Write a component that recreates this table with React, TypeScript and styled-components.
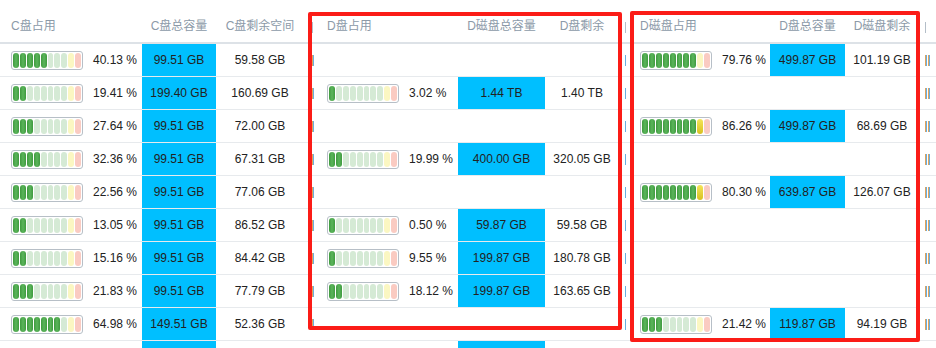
import React from "react";
import styled, { createGlobalStyle, css } from "styled-components";

const Global = createGlobalStyle`
  html, body { margin: 0; padding: 0; background: #fff; }
  body { width: 936px; height: 348px; overflow: hidden; font-family: "Liberation Sans", "Noto Sans CJK SC", Arial, sans-serif; }
`;

const COLS = "142px 74px 88px 12px 142px 87px 74px 10px 141px 75px 74px 17px";

const Page = styled.div`
  position: relative;
  width: 936px;
  height: 348px;
  overflow: hidden;
`;

const HeaderRow = styled.div`
  display: grid;
  grid-template-columns: ${COLS};
  height: 42px;
  border-bottom: 2px solid #dde2e7;
`;

const HeadCell = styled.div<{ $align?: "left" | "center" }>`
  display: flex;
  align-items: flex-end;
  justify-content: ${(p) => (p.$align === "left" ? "flex-start" : "center")};
  padding: 0 0 9px ${(p) => (p.$align === "left" ? "11px" : "0")};
  font-size: 12px;
  line-height: 14px;
  color: #8c9aa8;
  white-space: nowrap;
`;

const HeadSep = styled.div<{ $offset: number }>`
  position: relative;
  &::after {
    content: "";
    position: absolute;
    left: ${(p) => p.$offset}px;
    top: 22px;
    width: 1px;
    height: 11px;
    background: #b4bec8;
  }
`;

const Row = styled.div`
  display: grid;
  grid-template-columns: ${COLS};
  height: 33px;
`;

const cellBase = css`
  box-sizing: border-box;
  border-bottom: 1px solid #e7eaed;
  display: flex;
  align-items: center;
  font-size: 12px;
  color: #222;
  white-space: nowrap;
`;

const UsageCell = styled.div`
  ${cellBase};
  padding-left: 11px;
  gap: 10px;
`;

const ValueCell = styled.div<{ $blue?: boolean }>`
  ${cellBase};
  justify-content: center;
  background: ${(p) => (p.$blue ? "#00bfff" : "transparent")};
`;

const MarkerCell = styled.div`
  ${cellBase};
  position: relative;
`;

const Tick = styled.span<{ $left: number; $kind: "warm" | "cool" }>`
  position: absolute;
  left: ${(p) => p.$left}px;
  top: 11px;
  height: 11px;
  width: ${(p) => (p.$kind === "warm" ? 2 : 1)}px;
  background: ${(p) =>
    p.$kind === "warm"
      ? "linear-gradient(90deg, #e3a35a 50%, #6aaedf 50%)"
      : "#6aaedf"};
`;

const Bar = styled.div`
  box-sizing: border-box;
  width: 72px;
  height: 19px;
  border: 1px solid #b7bfc7;
  border-radius: 3px;
  padding: 1px;
  display: flex;
  gap: 1px;
  background: #fff;
  flex: none;
`;

const Seg = styled.div<{ $idx: number; $on: boolean }>`
  flex: 1;
  border-radius: 3px;
  background: ${(p) => {
    if (p.$idx === 8)
      return p.$on ? "linear-gradient(#f4e55a, #d8c020)" : "#fbf7c2";
    if (p.$idx === 9)
      return p.$on ? "linear-gradient(#f07a6a, #d04838)" : "#facbc2";
    return p.$on ? "linear-gradient(90deg, #3f9a3f, #5bb55b 50%, #3f9a3f)" : "#d5ead5";
  }};
`;

const Pct = styled.span`
  font-size: 12px;
`;

const Frame = styled.div<{ $l: number; $t: number; $w: number; $h: number }>`
  position: absolute;
  left: ${(p) => p.$l}px;
  top: ${(p) => p.$t}px;
  width: ${(p) => p.$w}px;
  height: ${(p) => p.$h}px;
  box-sizing: border-box;
  border: 4px solid #fb1c17;
  border-radius: 2px;
  pointer-events: none;
`;

type Disk = { pct: number; total: string; free: string } | null;

const rows: { c: Disk; d: Disk; e: Disk; partial?: boolean }[] = [
  { c: { pct: 40.13, total: "99.51 GB", free: "59.58 GB" }, d: null, e: { pct: 79.76, total: "499.87 GB", free: "101.19 GB" } },
  { c: { pct: 19.41, total: "199.40 GB", free: "160.69 GB" }, d: { pct: 3.02, total: "1.44 TB", free: "1.40 TB" }, e: null },
  { c: { pct: 27.64, total: "99.51 GB", free: "72.00 GB" }, d: null, e: { pct: 86.26, total: "499.87 GB", free: "68.69 GB" } },
  { c: { pct: 32.36, total: "99.51 GB", free: "67.31 GB" }, d: { pct: 19.99, total: "400.00 GB", free: "320.05 GB" }, e: null },
  { c: { pct: 22.56, total: "99.51 GB", free: "77.06 GB" }, d: null, e: { pct: 80.3, total: "639.87 GB", free: "126.07 GB" } },
  { c: { pct: 13.05, total: "99.51 GB", free: "86.52 GB" }, d: { pct: 0.5, total: "59.87 GB", free: "59.58 GB" }, e: null },
  { c: { pct: 15.16, total: "99.51 GB", free: "84.42 GB" }, d: { pct: 9.55, total: "199.87 GB", free: "180.78 GB" }, e: null },
  { c: { pct: 21.83, total: "99.51 GB", free: "77.79 GB" }, d: { pct: 18.12, total: "199.87 GB", free: "163.65 GB" }, e: null },
  { c: { pct: 64.98, total: "149.51 GB", free: "52.36 GB" }, d: null, e: { pct: 21.42, total: "119.87 GB", free: "94.19 GB" } },
  { c: { pct: 31.2, total: "", free: "" }, d: { pct: 12.4, total: "", free: "" }, e: null, partial: true },
];

const UsageBar = ({ pct }: { pct: number }) => {
  const n = Math.ceil(pct / 10);
  return (
    <Bar>
      {Array.from({ length: 10 }, (_, i) => (
        <Seg key={i} $idx={i} $on={i < n} />
      ))}
    </Bar>
  );
};

const Group = ({ disk, partial }: { disk: Disk; partial?: boolean }) => (
  <>
    <UsageCell>
      {disk && (
        <>
          <UsageBar pct={disk.pct} />
          {!partial && <Pct>{disk.pct.toFixed(2)} %</Pct>}
        </>
      )}
    </UsageCell>
    <ValueCell $blue={!!disk}>{disk?.total}</ValueCell>
    <ValueCell>{disk?.free}</ValueCell>
  </>
);

export default function App() {
  return (
    <Page>
      <Global />
      <HeaderRow>
        <HeadCell $align="left">C盘占用</HeadCell>
        <HeadCell>C盘总容量</HeadCell>
        <HeadCell>C盘剩余空间</HeadCell>
        <HeadSep $offset={8} />
        <HeadCell $align="left">D盘占用</HeadCell>
        <HeadCell>D磁盘总容量</HeadCell>
        <HeadCell>D盘剩余</HeadCell>
        <HeadSep $offset={6} />
        <HeadCell $align="left">D磁盘占用</HeadCell>
        <HeadCell>D盘总容量</HeadCell>
        <HeadCell>D磁盘剩余</HeadCell>
        <HeadSep $offset={6} />
      </HeaderRow>
      {rows.map((r, i) => (
        <Row key={i}>
          <Group disk={r.c} partial={r.partial} />
          <MarkerCell>
            <Tick $left={8} $kind="warm" />
          </MarkerCell>
          <Group disk={r.d} partial={r.partial} />
          <MarkerCell>
            <Tick $left={6} $kind="cool" />
          </MarkerCell>
          <Group disk={r.e} partial={r.partial} />
          <MarkerCell>
            <Tick $left={6} $kind="warm" />
            <Tick $left={9} $kind="warm" />
          </MarkerCell>
        </Row>
      ))}
      <Frame $l={308} $t={12} $w={314} $h={318} />
      <Frame $l={630} $t={11} $w={290} $h={331} />
    </Page>
  );
}
